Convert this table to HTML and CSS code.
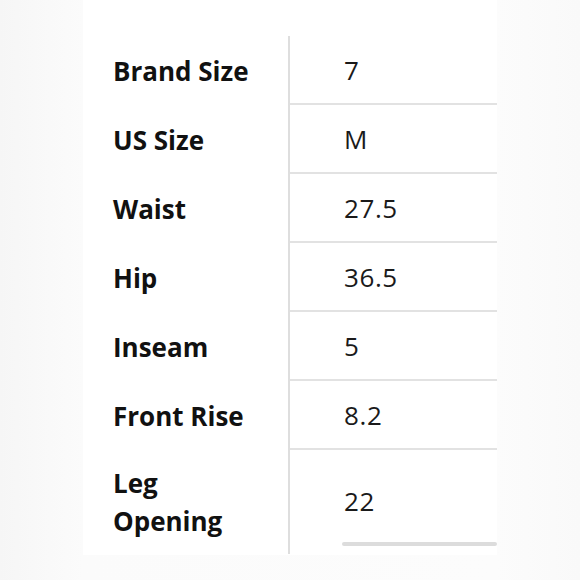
FILE: index.html
```html
<!DOCTYPE html>
<html>
<head>
<meta charset="utf-8">
<link rel="stylesheet" href="styles.css">
</head>
<body>
<div class="panel">
  <div class="table">
    <div class="label">Brand Size</div><div class="value">7</div>
    <div class="label">US Size</div><div class="value">M</div>
    <div class="label">Waist</div><div class="value">27.5</div>
    <div class="label">Hip</div><div class="value">36.5</div>
    <div class="label">Inseam</div><div class="value">5</div>
    <div class="label">Front Rise</div><div class="value">8.2</div>
    <div class="label last">Leg<br>Opening</div><div class="value last">22<div class="scrollbar"></div></div>
  </div>
</div>
</body>
</html>
```
FILE: styles.css
```css
html, body {
  margin: 0;
  padding: 0;
}
body {
  width: 580px;
  height: 580px;
  background: linear-gradient(to right, #f6f6f6 0, #fbfbfb 83px, #fcfcfc 497px, #f9f9f9 580px);
  font-family: "Open Sans", "Liberation Sans", sans-serif;
  overflow: hidden;
}
.panel {
  margin-left: 83px;
  width: 414px;
  height: 555px;
  background: #ffffff;
  padding-top: 36px;
  box-sizing: border-box;
}
.table {
  display: grid;
  grid-template-columns: 207px 207px;
  grid-auto-rows: 69px;
}
.label {
  display: flex;
  align-items: center;
  padding-left: 30px;
  font-weight: 700;
  font-size: 26px;
  color: #111111;
  border-right: 2px solid #dedede;
  line-height: 38px;
}
.value {
  display: flex;
  align-items: center;
  padding-left: 54px;
  font-size: 26px;
  letter-spacing: 0.6px;
  color: #1a1a1a;
  border-bottom: 2px solid #e2e2e2;
  box-sizing: border-box;
}
.label.last, .value.last {
  height: 104px;
}
.value.last {
  border-bottom: none;
  position: relative;
  padding-bottom: 2px;
}
.scrollbar {
  position: absolute;
  left: 52px;
  right: 0;
  bottom: 8px;
  height: 4px;
  border-radius: 2px;
  background: #dcdcdc;
}
```
